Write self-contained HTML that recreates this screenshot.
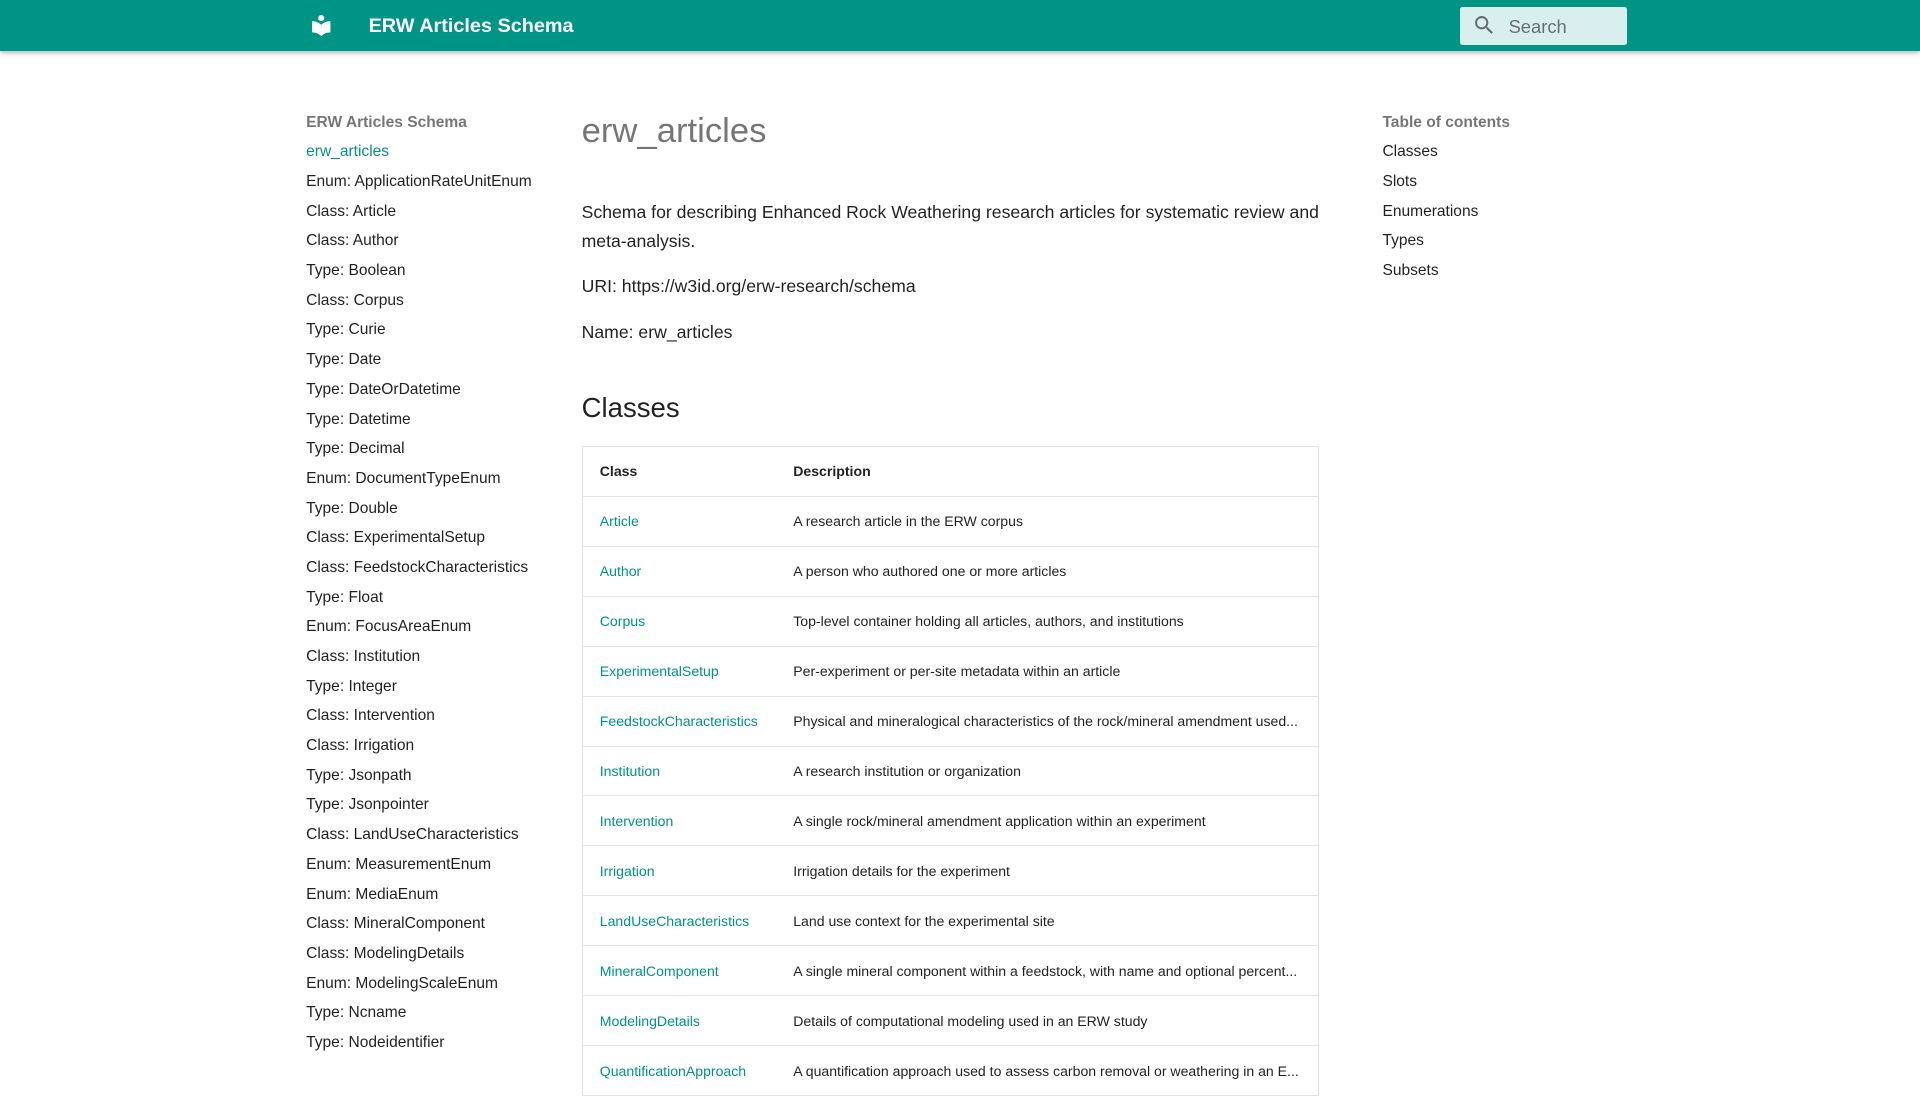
<!DOCTYPE html>
<html><head><meta charset="utf-8"><style>
html{zoom:1.2245}
body{margin:0;font-family:"Liberation Sans",sans-serif;color:rgba(0,0,0,.87);background:#fff;width:1568px;height:882px;overflow:hidden;position:relative}
.hdr{position:absolute;left:0;top:0;width:1568px;height:42px;background:#009485;box-shadow:0 0 4px rgba(0,0,0,.15),0 2px 4px rgba(0,0,0,.2)}
.hdr .t{position:absolute;left:301px;top:12px;color:#fff;font-size:16.2px;font-weight:bold}
.hdr svg{position:absolute;left:252px;top:11px}
.srch{position:absolute;left:1192px;top:6px;width:137px;height:31px;background:rgba(255,255,255,.85);border-radius:2px}
.srch span{position:absolute;left:40px;top:7px;color:rgba(0,0,0,.54);font-size:15px}
.srch svg{position:absolute;left:10px;top:5px}
.nav{position:absolute;left:250px;top:92px;font-size:12.7px}
.nav div{height:24.25px;line-height:16px}
.nav .h{font-weight:bold;color:rgba(0,0,0,.54)}
.nav .a{color:#009485}
.toc{position:absolute;left:1129px;top:92px;font-size:12.7px}
.toc div{height:24.25px;line-height:16px}
.toc .h{font-weight:bold;color:rgba(0,0,0,.54)}
.main{position:absolute;left:475px;top:89px;width:602px;font-size:14.4px}
h1{margin:0;font-weight:300;font-size:28.3px;color:rgba(0,0,0,.54);line-height:36px}
p{margin:0;line-height:23px}
h2{margin:0;font-weight:400;font-size:22.5px;position:absolute;top:231px}
table{position:absolute;top:275px;left:0;width:602px;table-layout:fixed;border-collapse:collapse;border:1px solid #e3e3e3;font-size:11.5px}
td,th{text-align:left;padding:0 0 0 14px;height:40px;border-top:1px solid #e3e3e3;white-space:nowrap;overflow:hidden}
th{font-weight:bold;height:40px}
td a{color:#009485;text-decoration:none}
</style></head><body>
<div class="hdr">
<svg width="20" height="20" viewBox="0 0 24 24"><path fill="#fff" d="M12 8a3 3 0 0 0 3-3 3 3 0 0 0-3-3 3 3 0 0 0-3 3 3 3 0 0 0 3 3m0 3.54C9.64 9.35 6.5 8 3 8v11c3.5 0 6.64 1.35 9 3.54 2.36-2.19 5.5-3.54 9-3.54V8c-3.5 0-6.64 1.35-9 3.54z"/></svg>
<div class="t">ERW Articles Schema</div>
<div class="srch"><svg width="20" height="20" viewBox="0 0 24 24"><path fill="rgba(0,0,0,.54)" d="M9.5 3A6.5 6.5 0 0 1 16 9.5c0 1.61-.59 3.09-1.56 4.23l.27.27h.79l5 5-1.5 1.5-5-5v-.79l-.27-.27A6.516 6.516 0 0 1 9.5 16 6.5 6.5 0 0 1 3 9.5 6.5 6.5 0 0 1 9.5 3m0 2C7 5 5 7 5 9.5S7 14 9.5 14 14 12 14 9.5 12 5 9.5 5z"/></svg><span>Search</span></div>
</div>
<div class="nav">
<div class="h">ERW Articles Schema</div><div class="a">erw_articles</div>
<div>Enum: ApplicationRateUnitEnum</div><div>Class: Article</div><div>Class: Author</div><div>Type: Boolean</div><div>Class: Corpus</div><div>Type: Curie</div><div>Type: Date</div><div>Type: DateOrDatetime</div><div>Type: Datetime</div><div>Type: Decimal</div><div>Enum: DocumentTypeEnum</div><div>Type: Double</div><div>Class: ExperimentalSetup</div><div>Class: FeedstockCharacteristics</div><div>Type: Float</div><div>Enum: FocusAreaEnum</div><div>Class: Institution</div><div>Type: Integer</div><div>Class: Intervention</div><div>Class: Irrigation</div><div>Type: Jsonpath</div><div>Type: Jsonpointer</div><div>Class: LandUseCharacteristics</div><div>Enum: MeasurementEnum</div><div>Enum: MediaEnum</div><div>Class: MineralComponent</div><div>Class: ModelingDetails</div><div>Enum: ModelingScaleEnum</div><div>Type: Ncname</div><div>Type: Nodeidentifier</div>
</div>
<div class="toc"><div class="h">Table of contents</div><div>Classes</div><div>Slots</div><div>Enumerations</div><div>Types</div><div>Subsets</div></div>
<div class="main">
<h1>erw_articles</h1>
<p style="margin-top:37px;white-space:nowrap">Schema for describing Enhanced Rock Weathering research articles for systematic review and<br>meta-analysis.</p>
<p style="margin-top:14px">URI: https://w3id.org/erw-research/schema</p>
<p style="margin-top:15px">Name: erw_articles</p>
<h2>Classes</h2>
<table>
<tr><th style="width:144px;border-top:none">Class</th><th style="border-top:none">Description</th></tr>
<tr><td><a>Article</a></td><td>A research article in the ERW corpus</td></tr>
<tr><td><a>Author</a></td><td>A person who authored one or more articles</td></tr>
<tr><td><a>Corpus</a></td><td>Top-level container holding all articles, authors, and institutions</td></tr>
<tr><td><a>ExperimentalSetup</a></td><td>Per-experiment or per-site metadata within an article</td></tr>
<tr><td><a>FeedstockCharacteristics</a></td><td>Physical and mineralogical characteristics of the rock/mineral amendment used...</td></tr>
<tr><td><a>Institution</a></td><td>A research institution or organization</td></tr>
<tr><td><a>Intervention</a></td><td>A single rock/mineral amendment application within an experiment</td></tr>
<tr><td><a>Irrigation</a></td><td>Irrigation details for the experiment</td></tr>
<tr><td><a>LandUseCharacteristics</a></td><td>Land use context for the experimental site</td></tr>
<tr><td><a>MineralComponent</a></td><td>A single mineral component within a feedstock, with name and optional percent...</td></tr>
<tr><td><a>ModelingDetails</a></td><td>Details of computational modeling used in an ERW study</td></tr>
<tr><td><a>QuantificationApproach</a></td><td>A quantification approach used to assess carbon removal or weathering in an E...</td></tr>
</table>
</div>
</body></html>
